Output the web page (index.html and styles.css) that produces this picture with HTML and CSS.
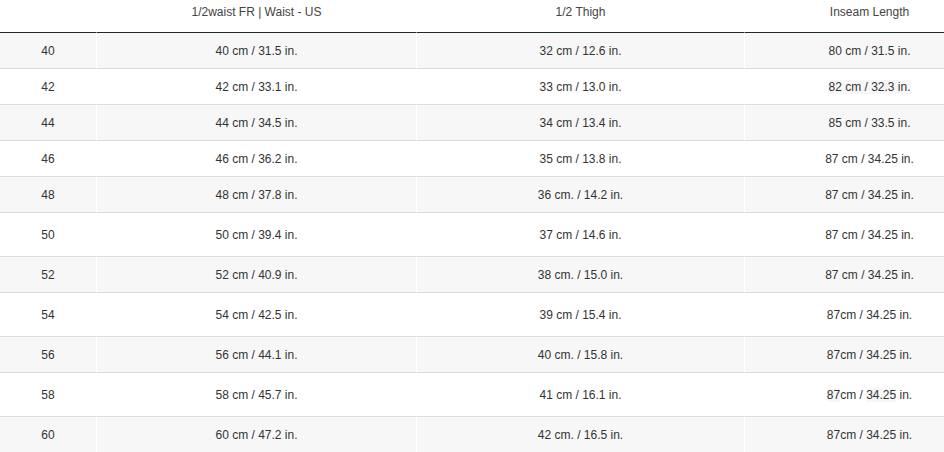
FILE: index.html
```html
<!DOCTYPE html>
<html>
<head>
<meta charset="utf-8">
<link rel="stylesheet" href="styles.css">
</head>
<body>
<div class="frame">
<table class="size-table">
  <colgroup>
    <col class="c1"><col class="c2"><col class="c3"><col class="c4">
  </colgroup>
  <thead>
    <tr><th></th><th>1/2waist FR | Waist - US</th><th>1/2 Thigh</th><th>Inseam Length</th></tr>
  </thead>
  <tbody>
    <tr class="odd"><td>40</td><td>40 cm / 31.5 in.</td><td>32 cm / 12.6 in.</td><td>80 cm / 31.5 in.</td></tr>
    <tr><td>42</td><td>42 cm / 33.1 in.</td><td>33 cm / 13.0 in.</td><td><span class="hl">82 cm / 32.3 in.</span></td></tr>
    <tr class="odd"><td>44</td><td>44 cm / 34.5 in.</td><td>34 cm / 13.4 in.</td><td>85 cm / 33.5 in.</td></tr>
    <tr><td>46</td><td>46 cm / 36.2 in.</td><td>35 cm / 13.8 in.</td><td>87 cm / 34.25 in.</td></tr>
    <tr class="odd"><td>48</td><td>48 cm / 37.8 in.</td><td>36 cm. / 14.2 in.</td><td>87 cm / 34.25 in.</td></tr>
    <tr class="tall"><td>50</td><td>50 cm / 39.4 in.</td><td>37 cm / 14.6 in.</td><td>87 cm / 34.25 in.</td></tr>
    <tr class="odd"><td>52</td><td>52 cm / 40.9 in.</td><td>38 cm. / 15.0 in.</td><td>87 cm / 34.25 in.</td></tr>
    <tr class="tall"><td>54</td><td>54 cm / 42.5 in.</td><td>39 cm / 15.4 in.</td><td>87cm / 34.25 in.</td></tr>
    <tr class="odd"><td>56</td><td>56 cm / 44.1 in.</td><td>40 cm. / 15.8 in.</td><td>87cm / 34.25 in.</td></tr>
    <tr class="tall"><td>58</td><td>58 cm / 45.7 in.</td><td>41 cm / 16.1 in.</td><td><span class="hl">87</span>cm / <span class="hl">34.25</span> in.</td></tr>
    <tr class="odd"><td>60</td><td>60 cm / 47.2 in.</td><td>42 cm. / 16.5 in.</td><td>87cm / 34.25 in.</td></tr>
  </tbody>
</table>
</div>
</body>
</html>
```
FILE: styles.css
```css
html, body {
  margin: 0;
  padding: 0;
  background: #fff;
  overflow: hidden;
}
.frame {
  width: 944px;
  overflow: hidden;
}
.size-table {
  border-collapse: separate;
  border-spacing: 0;
  table-layout: fixed;
  width: 994px;
  font-family: "Liberation Sans", Arial, sans-serif;
  font-size: 12px;
  color: #333;
}
.c1 { width: 96px; }
.c2 { width: 320px; }
.c3 { width: 328px; }
.c4 { width: 250px; }
.size-table th {
  font-weight: normal;
  color: #444;
  height: 33px;
  padding: 5px 0 0;
  box-sizing: border-box;
  vertical-align: top;
  text-align: center;
  line-height: 14px;
  border-bottom: 1px solid #1c2a28;
}
.size-table td {
  height: 36px;
  padding: 0;
  box-sizing: border-box;
  text-align: center;
  vertical-align: middle;
  line-height: 14px;
  border-bottom: 1px solid #dcdcdc;
}
.size-table td + td,
.size-table th + th {
  border-left: 1px solid #fff;
}
.size-table tr.odd td {
  background: #f7f7f7;
}
.size-table tr.tall td {
  height: 44px;
}
.hl {
  background: #f7f7f7;
}
```
